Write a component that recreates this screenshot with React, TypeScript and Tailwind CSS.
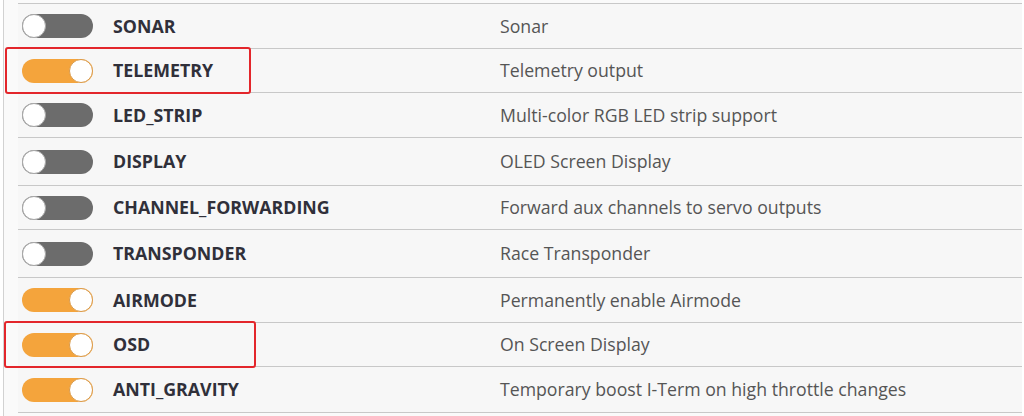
import React from "react";

type Row = { name: string; desc: string; on: boolean; h: number; boxed?: boolean };

const rows: Row[] = [
  { name: "SONAR", desc: "Sonar", on: false, h: 45 },
  { name: "TELEMETRY", desc: "Telemetry output", on: true, h: 44, boxed: true },
  { name: "LED_STRIP", desc: "Multi-color RGB LED strip support", on: false, h: 45 },
  { name: "DISPLAY", desc: "OLED Screen Display", on: false, h: 48 },
  { name: "CHANNEL_FORWARDING", desc: "Forward aux channels to servo outputs", on: false, h: 44 },
  { name: "TRANSPONDER", desc: "Race Transponder", on: false, h: 48 },
  { name: "AIRMODE", desc: "Permanently enable Airmode", on: true, h: 45 },
  { name: "OSD", desc: "On Screen Display", on: true, h: 44, boxed: true },
  { name: "ANTI_GRAVITY", desc: "Temporary boost I-Term on high throttle changes", on: true, h: 46 },
];

function Toggle({ on }: { on: boolean }) {
  return (
    <div
      className={
        on
          ? "relative w-[71px] h-[24px] rounded-full bg-[#f4a43c]"
          : "relative w-[71px] h-[24px] rounded-full bg-[#6c6c6c]"
      }
    >
      <div
        className={
          on
            ? "absolute top-0 right-0 w-[24px] h-[24px] rounded-full bg-white border border-[#d99a4a]"
            : "absolute top-0 left-0 w-[24px] h-[24px] rounded-full bg-white border border-[#a8a8a8]"
        }
      />
    </div>
  );
}

export default function App() {
  return (
    <div
      className="w-[1024px] h-[416px] bg-white overflow-hidden"
      style={{ fontFamily: '"Open Sans", "Noto Sans", sans-serif' }}
    >
      <div className="ml-[3px] w-[1019px] h-[416px] border-l border-[#d2d2d2] bg-[#fafafa] pt-[3px]">
        <div className="ml-[14px] border-b border-[#c8c8c8]">
          {rows.map((r) => (
            <div
              key={r.name}
              className="relative flex items-center border-t border-[#c8c8c8] bg-[#f7f7f7]"
              style={{ height: r.h }}
            >
              <div className="w-[95px] pl-[4px] shrink-0">
                <Toggle on={r.on} />
              </div>
              <div className="w-[387px] shrink-0 text-[17.8px] font-bold text-[#30303a]">
                {r.name}
              </div>
              <div className="text-[17.7px] text-[#555555]">{r.desc}</div>
              {r.boxed && (
                <div
                  className={
                    r.name === "OSD"
                      ? "absolute z-10 left-[-14px] top-[-2px] w-[252px] h-[47px] border-2 border-[#e3262b] rounded-[3px]"
                      : "absolute z-10 left-[-13px] top-[-2px] w-[246px] h-[47px] border-2 border-[#e3262b] rounded-[3px]"
                  }
                />
              )}
            </div>
          ))}
        </div>
      </div>
    </div>
  );
}
